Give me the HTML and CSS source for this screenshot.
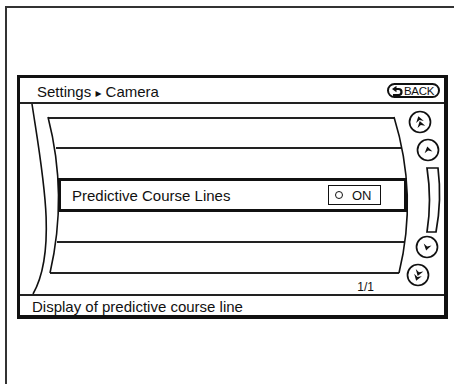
FILE: index.html
```html
<!DOCTYPE html>
<html lang="en">
<head>
	<meta charset="UTF-8">
	<title>Settings - Camera</title>
	<link rel="stylesheet" href="styles.css">
</head>
<body>
	<div class="page">
		<div class="screen">
			<!-- Title bar -->
			<div class="header">
				<span class="title">Settings <span class="sep">&#9656;</span> Camera</span>
				<span class="back-btn">
					<svg class="back-icon" width="11" height="10" viewBox="0 0 11 10">
						<path d="M0,3 L4.5,-0.2 L4.5,6.2 Z" fill="#111"/>
						<path d="M3,3 H6.5 A3,3 0 0 1 6.5,9 H1" fill="none" stroke="#111" stroke-width="2.2"/>
					</svg>BACK</span>
			</div>

			<!-- Menu list -->
			<div class="main">
				<div class="list">
					<svg class="curves" viewBox="20 104 388 190">
						<path d="M32,104 C42,170 58,250 33,294" />
						<path d="M48,117 Q68,195 50,273" />
						<path d="M394,117 Q418,195 399,273" />
					</svg>
					<div class="row row-1"></div>
					<div class="row row-2"></div>
					<div class="row row-3">
						<span>Predictive Course Lines</span>
						<span class="toggle"><i class="dot"></i>ON</span>
					</div>
					<div class="row row-4"></div>
					<div class="row row-5"></div>
					<div class="pager">1/1</div>
				</div>

				<svg class="scroller" viewBox="408 104 36 190">
					<g fill="#fff" stroke="#111" stroke-width="1.7">
						<circle cx="420" cy="122" r="10.5"/>
						<circle cx="428" cy="150" r="10.5"/>
						<path d="M427,168 L438,168 Q442,200 436,232 L427,232 Q432,200 427,168 Z"/>
						<circle cx="427" cy="247" r="10.5"/>
						<circle cx="418" cy="275" r="10.5"/>
					</g>
					<g fill="#111">
						<g transform="translate(420 122) rotate(-16)">
							<path d="M0,-6 L4,0 L0,-2 L-4,0 Z"/>
							<path d="M0,-1 L4,5 L0,3 L-4,5 Z"/>
						</g>
						<g transform="translate(428 150) rotate(-12)">
							<path d="M0,-3.5 L4,2.5 L0,0.5 L-4,2.5 Z"/>
						</g>
						<g transform="translate(427 247) rotate(14)">
							<path d="M0,3.5 L4,-2.5 L0,-0.5 L-4,-2.5 Z"/>
						</g>
						<g transform="translate(418 275) rotate(18)">
							<path d="M0,6 L4,0 L0,2 L-4,0 Z"/>
							<path d="M0,1 L4,-5 L0,-3 L-4,-5 Z"/>
						</g>
					</g>
				</svg>
			</div>

			<!-- Help line -->
			<div class="footer">Display of predictive course line</div>
		</div>
	</div>
</body>
</html>
```

FILE: styles.css
```css
body {
	margin: 0;
	background-color: #fff;
	color: #111;
	font-family: "Liberation Sans", Arial, sans-serif;
}

.page {
	margin: 6px 0 0 5px;
	height: 378px;
	box-sizing: border-box;
	border-left: 2px solid #333;
	border-top: 2px solid #333;
	padding: 67px 0 0 10px;
}

.screen {
	width: 431px;
	box-sizing: border-box;
	border: 3px solid #111;
	border-right-width: 4px;
	border-bottom-width: 4px;
}

.header {
	display: flex;
	align-items: center;
	justify-content: space-between;
	height: 26px;
	box-sizing: border-box;
	padding: 0 4px 0 17px;
	border-bottom: 2px solid #222;
}

.title {
	font-size: 15px;
	margin-top: 3px;
}

.sep {
	font-family: "DejaVu Sans", sans-serif;
	font-size: 12px;
}

.back-btn {
	display: flex;
	align-items: center;
	width: 53px;
	height: 15px;
	box-sizing: border-box;
	border: 2px solid #111;
	border-radius: 8px;
	padding-left: 3px;
	margin-top: 1px;
	font-size: 11.5px;
	letter-spacing: -0.3px;
}

.back-icon {
	margin-right: 1px;
}

.main {
	display: flex;
	height: 190px;
}

.list {
	position: relative;
	width: 388px;
	box-sizing: border-box;
	padding-top: 13px;
}

.curves {
	position: absolute;
	left: 0;
	top: 0;
	width: 388px;
	height: 190px;
	overflow: visible;
	fill: none;
	stroke: #111;
	stroke-width: 1.6;
	pointer-events: none;
}

.row {
	box-sizing: border-box;
}

.row-1 {
	height: 30px;
	margin: 0 14px 0 28px;
	border-top: 2px solid #222;
}

.row-2 {
	height: 31px;
	margin: 0 6px 0 36px;
	border-top: 2px solid #222;
}

.row-3 {
	display: flex;
	align-items: center;
	justify-content: space-between;
	height: 34px;
	margin: 0 1px 0 38px;
	padding: 0 23px 0 11px;
	border: 3px solid #111;
	font-size: 15px;
}

.row-4 {
	height: 31px;
	margin: 0 4px 0 37px;
	border-bottom: 2px solid #222;
}

.row-5 {
	height: 31px;
	margin: 0 9px 0 30px;
	border-bottom: 2px solid #222;
}

.toggle {
	display: flex;
	align-items: center;
	width: 53px;
	height: 20px;
	box-sizing: border-box;
	padding-left: 6px;
	border: 1px solid #111;
	font-size: 13px;
}

.dot {
	width: 8px;
	height: 8px;
	box-sizing: border-box;
	border: 1.5px solid #111;
	border-radius: 50%;
	margin-right: 9px;
}

.pager {
	margin: 6px 34px 0 0;
	text-align: right;
	font-size: 12px;
	line-height: 14px;
}

.scroller {
	width: 36px;
	height: 190px;
	overflow: visible;
}

.footer {
	height: 21px;
	box-sizing: border-box;
	padding: 2px 0 0 12px;
	border-top: 2px solid #222;
	font-size: 15px;
	line-height: 17px;
}
```
